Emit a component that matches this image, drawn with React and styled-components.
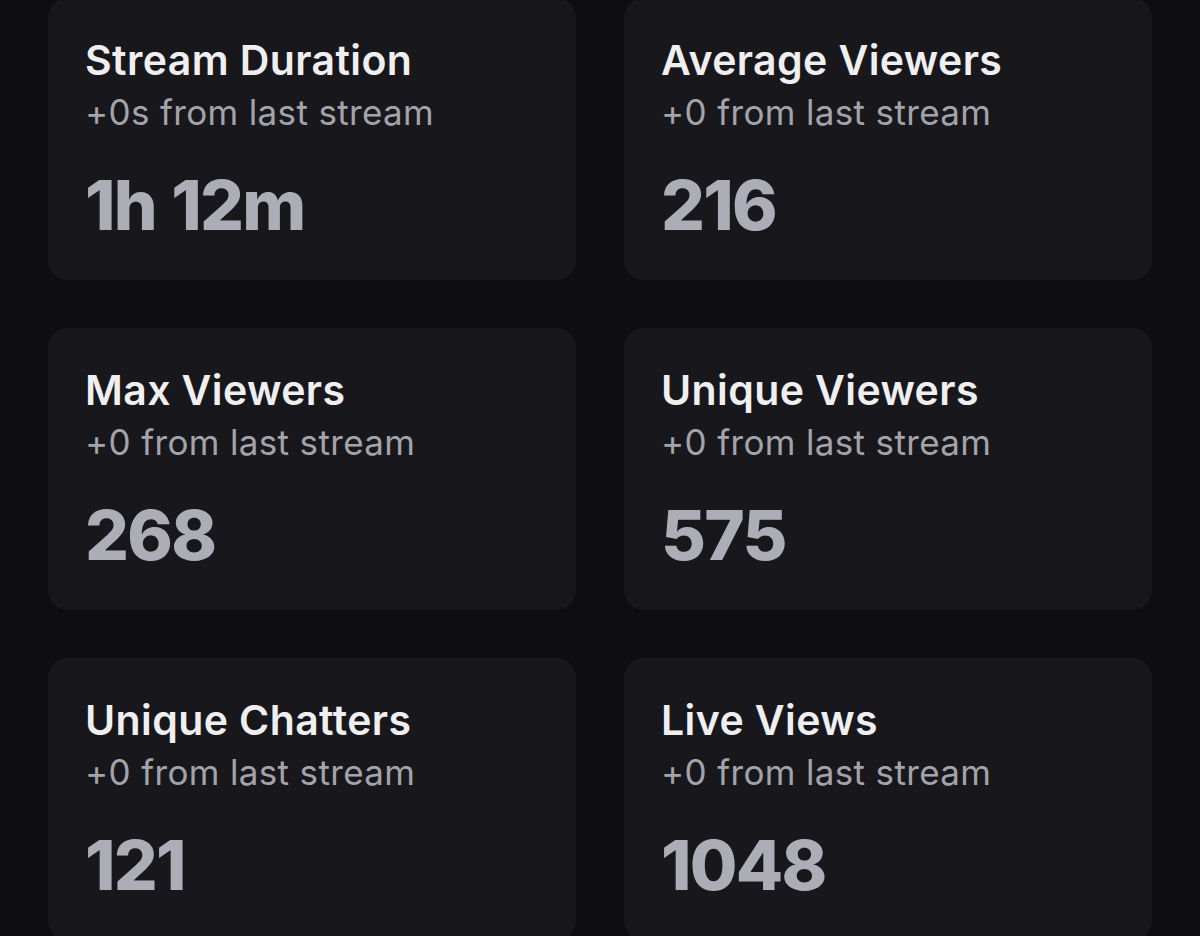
import React from 'react';
import styled, { createGlobalStyle } from 'styled-components';

const GlobalStyle = createGlobalStyle`
  html, body {
    margin: 0;
    padding: 0;
    background: #0e0e10;
    overflow: hidden;
  }
  body {
    font-family: Inter, "Noto Sans", sans-serif;
    -webkit-font-smoothing: antialiased;
  }
`;

const stats = [
  { title: 'Stream Duration', delta: '+0s from last stream', value: '1h 12m' },
  { title: 'Average Viewers', delta: '+0 from last stream', value: '216' },
  { title: 'Max Viewers', delta: '+0 from last stream', value: '268' },
  { title: 'Unique Viewers', delta: '+0 from last stream', value: '575' },
  { title: 'Unique Chatters', delta: '+0 from last stream', value: '121' },
  { title: 'Live Views', delta: '+0 from last stream', value: '1048' },
];

export default function App() {
  return (
    <>
      <GlobalStyle />
      <Page>
        <Grid>
          {stats.map((s) => (
            <Card key={s.title}>
              <Title>{s.title}</Title>
              <Delta>{s.delta}</Delta>
              <Value>{s.value}</Value>
            </Card>
          ))}
        </Grid>
      </Page>
    </>
  );
}

const Page = styled.div`
  width: 1200px;
  height: 936px;
  overflow: hidden;
  background: #0e0e10;
`;

const Grid = styled.div`
  display: grid;
  grid-template-columns: 528px 528px;
  column-gap: 48px;
  row-gap: 48px;
  padding-left: 48px;
  margin-top: -2px;
`;

const Card = styled.div`
  height: 282px;
  box-sizing: border-box;
  background: #18181c;
  border-radius: 20px;
  padding: 38px 37px 0;
  display: flex;
  flex-direction: column;
`;

const Title = styled.div`
  color: #efeff1;
  font-size: 41px;
  font-weight: 600;
  line-height: 48px;
  letter-spacing: 0.4px;
`;

const Delta = styled.div`
  margin-top: 6px;
  color: #a3a3ab;
  font-size: 35px;
  font-weight: 400;
  line-height: 44px;
  letter-spacing: 0.35px;
`;

const Value = styled.div`
  margin-top: 31px;
  color: #adadb8;
  font-size: 69px;
  font-weight: 800;
  line-height: 80px;
  letter-spacing: -1.7px;
  word-spacing: 2px;
`;
